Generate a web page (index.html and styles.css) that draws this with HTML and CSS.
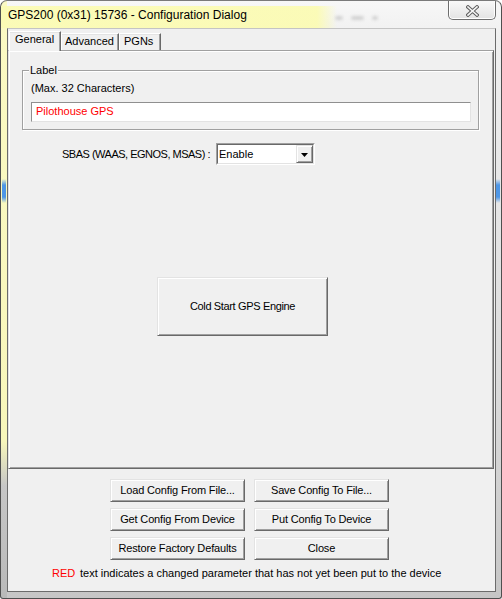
FILE: index.html
```html
<!DOCTYPE html>
<html>
<head>
<meta charset="utf-8">
<title>GPS200 Configuration Dialog</title>
<link rel="stylesheet" href="styles.css">
</head>
<body>
<div class="window">
  <div class="titlebar">
    <span class="title">GPS200 (0x31) 15736 - Configuration Dialog</span>
    <div class="ghost"><span class="g1"></span><span class="g2"></span><span class="g3"></span></div>
    <div class="close">
      <svg width="13" height="12" viewBox="0 0 13 12">
        <path d="M2 2 L11 10 M11 2 L2 10" stroke="#5f5f5f" stroke-width="3.6" stroke-linecap="square" fill="none"/>
        <path d="M2 2 L11 10 M11 2 L2 10" stroke="#f6f6f6" stroke-width="1.6" stroke-linecap="square" fill="none"/>
      </svg>
    </div>
  </div>
  <div class="client">
    <div class="tabs">
      <div class="tab active">General</div>
      <div class="tab adv">Advanced</div>
      <div class="tab pgn">PGNs</div>
    </div>
    <div class="panel">
      <div class="group">
        <span class="legend">Label</span>
        <div class="hint">(Max. 32 Characters)</div>
        <div class="textbox"><span class="changed">Pilothouse GPS</span></div>
      </div>
      <div class="row">
        <span class="row-label">SBAS (WAAS, EGNOS, MSAS) :</span>
        <div class="combo">
          <div class="combo-in">
            <span class="combo-text">Enable</span>
            <div class="drop">
              <svg width="7" height="4" viewBox="0 0 7 4"><path d="M0 0 H7 L3.5 4 Z" fill="#000"/></svg>
            </div>
          </div>
        </div>
      </div>
      <button class="btn big">Cold Start GPS Engine</button>
    </div>
    <div class="footer">
      <div class="btngrid">
        <button class="btn">Load Config From File...</button>
        <button class="btn">Save Config To File...</button>
        <button class="btn">Get Config From Device</button>
        <button class="btn">Put Config To Device</button>
        <button class="btn">Restore Factory Defaults</button>
        <button class="btn">Close</button>
      </div>
      <p class="note"><span class="red">RED</span><span>text indicates a changed parameter that has not yet been put to the device</span></p>
    </div>
  </div>
</div>
</body>
</html>
```

FILE: styles.css
```css
* { box-sizing: border-box; }
html, body { margin: 0; padding: 0; }
body {
  width: 502px;
  height: 599px;
  overflow: hidden;
  font-family: "Liberation Sans", Arial, sans-serif;
  font-size: 11px;
  color: #000;
  background: #ffffff;
}

.window {
  width: 502px;
  height: 599px;
  border: 1px solid #4f4f4f;
  border-top-color: #7a7a7a;
  border-radius: 7px 7px 3px 3px;
  overflow: hidden;
  display: flex;
  flex-direction: column;
  background:
    linear-gradient(to bottom, rgba(79,151,230,0) 0, #4f97e6 25%, #4f97e6 75%, rgba(79,151,230,0) 100%) 1px 178px / 4px 24px no-repeat,
    linear-gradient(to bottom, rgba(79,151,230,0) 0, #4f97e6 25%, #4f97e6 75%, rgba(79,151,230,0) 100%) right 1px top 178px / 4px 24px no-repeat,
    linear-gradient(to bottom, #fbfac4 0, #f8f7bb 440px, #c6c6c6 485px, #b9b9b9 100%) 0 0 / 6px 100% no-repeat,
    linear-gradient(to bottom, #f7f7f7 0, #efefef 40px, #dadada 400px, #c6c6c6 100%);
}

/* ---------- title bar ---------- */
.titlebar {
  height: 27px;
  flex: none;
  display: flex;
  align-items: flex-start;
  padding-left: 7px;
  background: linear-gradient(to right, rgba(251,251,180,0.95) 0, rgba(251,251,180,0.95) 316px, rgba(251,251,180,0) 336px) 0 5px / 100% 22px no-repeat;
}
.title {
  font-size: 12px;
  line-height: 14px;
  margin-top: 7px;
  white-space: nowrap;
}
.ghost {
  display: flex;
  align-items: center;
  gap: 8px;
  margin: 15px 0 0 88px;
  filter: blur(1.5px);
}
.ghost span { display: block; height: 4px; background: #d2d2d2; border-radius: 2px; }
.ghost .g1 { width: 8px; }
.ghost .g2 { width: 13px; }
.ghost .g3 { width: 6px; }
.close {
  margin: 0 5px 0 auto;
  width: 48px;
  height: 19px;
  border: 1px solid #6e6e6e;
  border-top: none;
  border-radius: 0 0 5px 5px;
  background: linear-gradient(to bottom, #f9f9f9, #e3e3e3);
  box-shadow: inset 0 -1px 0 #ffffff, inset 1px 0 0 #ffffff, inset -1px 0 0 #ffffff;
  display: flex;
  align-items: center;
  justify-content: center;
  padding-top: 1px;
}
.close svg { display: block; }

/* ---------- client ---------- */
.client {
  flex: none;
  height: 564px;
  margin: 0 5px 6px 6px;
  border: 1px solid #6b6b6b;
  border-top-color: #c4c4c4;
  background: #f0f0f0;
  display: flex;
  flex-direction: column;
}

.tabs {
  display: flex;
  align-items: flex-start;
  height: 21px;
  padding: 2px 0 0 1px;
  flex: none;
}
.tab {
  height: 17px;
  margin-top: 2px;
  padding: 1px 0 0 3px;
  line-height: 13px;
  border: 1px solid;
  border-color: #ffffff #696969 transparent #ffffff;
  border-bottom: none;
  box-shadow: inset -1px 0 0 #a0a0a0, inset 0 1px 0 #e3e3e3;
  background: #f0f0f0;
  white-space: nowrap;
}
.tab.active {
  position: relative;
  z-index: 1;
  height: 20px;
  margin-top: 0;
  margin-bottom: -1px;
  width: 52px;
  padding-left: 5px;
}
.tab.adv { width: 58px; padding-left: 3px; }
.tab.pgn { width: 42px; padding-left: 4px; }

.panel {
  flex: none;
  height: 419px;
  margin-right: 1px;
  border: 1px solid;
  border-color: #a0a0a0 #696969 #696969 #e3e3e3;
  box-shadow: inset 1px 1px 0 #ffffff, inset -1px -1px 0 #a0a0a0;
  display: flex;
  flex-direction: column;
  align-items: flex-start;
}

.group {
  align-self: stretch;
  margin: 19px 14px 0 13px;
  border: 1px solid #a0a0a0;
  box-shadow: inset 1px 1px 0 #ffffff, 1px 1px 0 #ffffff;
  padding: 0 7px 7px 8px;
}
.legend {
  display: table;
  margin: -7px 0 0 -2px;
  padding: 0 1px;
  line-height: 13px;
  background: #f0f0f0;
}
.hint {
  margin-top: 5px;
  line-height: 13px;
}
.textbox {
  margin-top: 7px;
  height: 20px;
  border: 1px solid;
  border-color: #8f8f8f #e3e3e3 #e3e3e3 #8f8f8f;
  background: #ffffff;
  padding: 2px 4px 0 4px;
  line-height: 13px;
}
.changed, .red { color: #ff0000; }

.row {
  display: flex;
  align-items: center;
  margin-top: 13px;
  padding-left: 53px;
  height: 22px;
}
.row-label {
  width: 154px;
  line-height: 13px;
  letter-spacing: -0.5px;
  white-space: nowrap;
}
.combo {
  width: 99px;
  height: 22px;
  border: 1px solid;
  border-color: #a0a0a0 #ffffff #ffffff #a0a0a0;
}
.combo-in {
  height: 100%;
  border: 1px solid;
  border-color: #696969 #e3e3e3 #e3e3e3 #696969;
  background: #ffffff;
  display: flex;
  align-items: center;
}
.combo-text {
  flex: 1;
  padding-left: 1px;
  line-height: 13px;
}
.drop {
  width: 17px;
  height: 18px;
  border: 1px solid;
  border-color: #e3e3e3 #696969 #696969 #e3e3e3;
  box-shadow: inset 1px 1px 0 #ffffff, inset -1px -1px 0 #a0a0a0;
  background: #f0f0f0;
  display: flex;
  align-items: center;
  justify-content: center;
  padding-top: 1px;
}
.drop svg { display: block; }

.btn {
  font: inherit;
  color: #000;
  margin: 0;
  padding: 0;
  line-height: 13px;
  letter-spacing: -0.15px;
  background: #f0f0f0;
  border: 1px solid;
  border-color: #e3e3e3 #696969 #696969 #e3e3e3;
  box-shadow: inset 1px 1px 0 #ffffff, inset -1px -1px 0 #a0a0a0;
  display: flex;
  align-items: center;
  justify-content: center;
  white-space: nowrap;
}
.btn.big {
  width: 171px;
  height: 59px;
  margin: 112px 0 0 148px;
  letter-spacing: -0.35px;
}

/* ---------- footer ---------- */
.footer {
  flex: 1;
  padding: 10px 0 0 102px;
}
.btngrid {
  display: grid;
  grid-template-columns: 135px 135px;
  grid-auto-rows: 23px;
  column-gap: 9px;
  row-gap: 6px;
}
.note {
  margin: 7px 0 0 -58px;
  line-height: 13px;
  display: flex;
  white-space: nowrap;
}
.note .red { width: 28px; }
```
